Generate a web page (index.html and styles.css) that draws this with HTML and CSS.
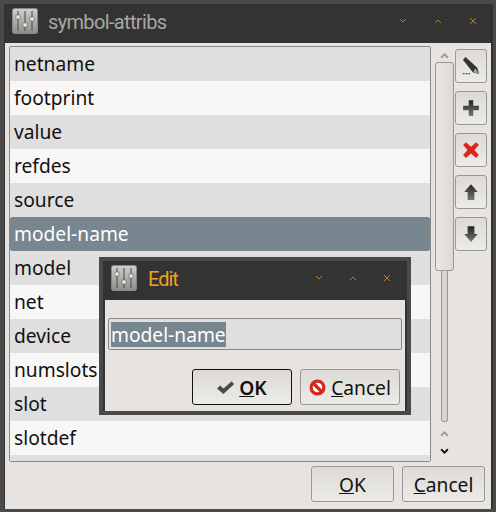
FILE: index.html
```html
<!DOCTYPE html>
<html>
<head>
<meta charset="utf-8" />
<title>symbol-attribs</title>
<link rel="stylesheet" href="styles.css">
</head>
<body>
	<svg class="defs" width="0" height="0">
		<defs>
			<linearGradient id="mixer-bg" x1="0" y1="0" x2="0" y2="1">
				<stop offset="0" stop-color="#d2d0cc"/>
				<stop offset="1" stop-color="#8f8d88"/>
			</linearGradient>
			<linearGradient id="arrow-bg" x1="0" y1="0" x2="0" y2="1">
				<stop offset="0" stop-color="#222"/>
				<stop offset="1" stop-color="#777"/>
			</linearGradient>
			<symbol id="mixer" viewBox="0 0 26 26">
				<rect x="0.500" y="0.500" width="25" height="25" rx="2" fill="url(#mixer-bg)" stroke="#8a8884"/>
				<path d="M6 3v20M13 3v20M20 3v20" stroke="#5a5a5a" stroke-width="1.200"/>
				<rect x="4" y="7" width="4" height="4" fill="#e8e8e8" stroke="#666" stroke-width=".6"/>
				<rect x="11" y="15" width="4" height="4" fill="#e8e8e8" stroke="#666" stroke-width=".6"/>
				<rect x="18" y="9" width="4" height="4" fill="#e8e8e8" stroke="#666" stroke-width=".6"/>
			</symbol>
		</defs>
	</svg>

	<div class="window">
		<div class="titlebar">
			<svg class="app-icon"><use href="#mixer"/></svg>
			<span class="title">symbol-attribs</span>
			<div class="wm-btns">
				<svg viewBox="0 0 8 6"><path d="M1 1l3 3 3-3"/></svg>
				<svg viewBox="0 0 8 6"><path d="M1 5l3-3 3 3"/></svg>
				<svg viewBox="0 0 8 8"><path d="M1 1l6 6M7 1l-6 6"/></svg>
			</div>
		</div>
		<div class="client">
			<div class="main">
				<div class="list">
					<div class="row">netname</div>
					<div class="row alt">footprint</div>
					<div class="row">value</div>
					<div class="row alt">refdes</div>
					<div class="row">source</div>
					<div class="row selected">model-name</div>
					<div class="row">model</div>
					<div class="row alt">net</div>
					<div class="row">device</div>
					<div class="row alt">numslots</div>
					<div class="row">slot</div>
					<div class="row alt">slotdef</div>
					<div class="row"></div>
				</div>
				<div class="scrollbar">
					<svg class="sb-arrow up-top" viewBox="0 0 8 6"><path d="M1 5l3-3 3 3"/></svg>
					<div class="thumb"></div>
					<div class="groove"></div>
					<svg class="sb-arrow up-bottom" viewBox="0 0 8 6"><path d="M1 5l3-3 3 3"/></svg>
					<svg class="sb-arrow down" viewBox="0 0 8 6"><path d="M1 1l3 3 3-3"/></svg>
				</div>
				<div class="tools">
					<button class="tool">
						<svg class="pencil" viewBox="0 0 20 20">
							<path d="M1 3l3-3 13 12 2 7-7-2z" fill="#333"/>
							<path d="M15 12.500l4 6.500-6.500-2.500z" fill="#a5a3a0"/>
							<path d="M1 18.500h2M4 18.500h2M7 18.500h2" stroke="#555" stroke-width="1.500"/>
						</svg>
					</button>
					<button class="tool">
						<svg viewBox="0 0 16 16"><path d="M6 1h4v5h5v4h-5v5H6v-5H1V6h5z" fill="url(#arrow-bg)"/></svg>
					</button>
					<button class="tool">
						<svg viewBox="0 0 16 16"><path d="M3.500 1L8 5l4.500-4L15 3.500 11 8l4 4.500-2.500 2.500L8 11l-4.500 4L1 12.500 5 8 1 3.500z" fill="#d8281c"/></svg>
					</button>
					<button class="tool">
						<svg viewBox="0 0 14 16"><path d="M7 1l6 7H10v7H4V8H1z" fill="url(#arrow-bg)"/></svg>
					</button>
					<button class="tool">
						<svg viewBox="0 0 14 16"><path d="M4 1h6v7h3l-6 7-6-7h3z" fill="url(#arrow-bg)"/></svg>
					</button>
				</div>
			</div>
			<div class="actions">
				<button class="btn"><span><u>O</u>K</span></button>
				<button class="btn"><span><u>C</u>ancel</span></button>
			</div>
		</div>
	</div>

	<div class="dialog">
		<div class="titlebar small">
			<svg class="app-icon"><use href="#mixer"/></svg>
			<span class="title">Edit</span>
			<div class="wm-btns">
				<svg viewBox="0 0 8 6"><path d="M1 1l3 3 3-3"/></svg>
				<svg viewBox="0 0 8 6"><path d="M1 5l3-3 3 3"/></svg>
				<svg viewBox="0 0 8 8"><path d="M1 1l6 6M7 1l-6 6"/></svg>
			</div>
		</div>
		<div class="dialog-body">
			<div class="input"><span class="sel">model-name</span></div>
			<div class="dialog-actions">
				<button class="btn default">
					<svg viewBox="1 1 16 12"><path d="M1 8l3-3 3 3 8-7 2 3L7 13z" fill="#4a4a4a"/></svg>
					<span class="bold"><u>O</u>K</span>
				</button>
				<button class="btn">
					<svg viewBox="0 0 16 16">
						<circle cx="8" cy="8" r="6" fill="#fff" stroke="#d0281c" stroke-width="3"/>
						<path d="M4 4l8 8" stroke="#d0281c" stroke-width="3"/>
					</svg>
					<span><u>C</u>ancel</span>
				</button>
			</div>
		</div>
	</div>
</body>
</html>
```

FILE: styles.css
```css
* {
	margin: 0;
	padding: 0;
	box-sizing: border-box;
}
html,body {
	width: 100%;
	height: 100%;
	overflow: hidden;
}
body {
	font-family: "Noto Sans", sans-serif;
	font-size: 19.2px;
	color: #111;
	background: #333;
}
.defs {
	position: absolute;
}
.window {
	width: 496px;
	height: 512px;
	display: flex;
	flex-direction: column;
	background: #333;
	border: 4px solid #4a4a4a;
	border-right-width: 3px;
	border-bottom-width: 3px;
}
.titlebar {
	height: 39px;
	flex: none;
	display: flex;
	align-items: center;
	padding-left: 8px;
	padding-bottom: 5px;
}
.app-icon {
	width: 26px;
	height: 26px;
	flex: none;
}
.title {
	margin-left: 10px;
	margin-top: 2px;
	font-family: Roboto, sans-serif;
	font-size: 20px;
	letter-spacing: -0.65px;
	color: #a9a7a2;
}
.wm-btns {
	margin-left: auto;
	display: flex;
	gap: 27px;
	padding-right: 16px;
	align-items: center;
}
.wm-btns svg {
	width: 8px;
	height: 8px;
	fill: none;
	stroke: #b5811f;
	stroke-width: 1;
}
.client {
	flex: 1;
	margin-left: 1px;
	margin-right: 2px;
	background: #e6e3e0;
	padding: 3px 3px 5px 4px;
	display: flex;
	flex-direction: column;
	min-height: 0;
}
.main {
	display: flex;
	height: 416px;
}
.list {
	width: 422px;
	height: 416px;
	flex: none;
	border: 1px solid #8a8884;
	border-radius: 2px;
	background: #f8f7f5;
	overflow: hidden;
}
.row {
	height: 34px;
	line-height: 34px;
	padding-left: 4px;
	background: #dfdfdf;
}
.row.alt {
	background: #f8f7f5;
}
.row.selected {
	background: #78868f;
	color: #fff;
	border-radius: 2px;
}
.scrollbar {
	width: 19px;
	margin-left: 4px;
	display: flex;
	flex-direction: column;
	align-items: center;
	flex: none;
}
.sb-arrow {
	width: 9px;
	height: 7px;
	flex: none;
	fill: none;
	stroke: #9b9995;
	stroke-width: 1.6;
}
.sb-arrow.up-top {
	margin-top: 6px;
}
.sb-arrow.up-bottom {
	margin-top: 8px;
}
.sb-arrow.down {
	margin-top: 11px;
	stroke: #111;
}
.thumb {
	width: 19px;
	height: 209px;
	margin-top: 3px;
	border: 1px solid #9a9894;
	border-radius: 3px;
	background: linear-gradient(to right, #e9e6e3, #dcd9d5);
}
.groove {
	width: 7px;
	height: 151px;
	border: 1px solid #9a9894;
	border-top: 0;
	border-radius: 0 0 3px 3px;
	background: #d9d6d2;
}
.tools {
	display: flex;
	flex-direction: column;
	gap: 8px;
	margin-left: 1px;
	margin-top: 3px;
}
.tool {
	width: 32px;
	height: 34px;
	display: flex;
	align-items: center;
	justify-content: center;
	border: 1px solid #9a9894;
	border-radius: 3px;
	background: linear-gradient(#dddad6, #ecebe8);
}
.tool svg {
	width: 18px;
	height: 18px;
}
.actions {
	display: flex;
	justify-content: flex-end;
	gap: 8px;
	margin-top: 4px;
	padding-right: 3px;
}
.btn {
	height: 36px;
	width: 83px;
	display: flex;
	align-items: center;
	justify-content: center;
	gap: 5px;
	border: 1px solid #9a9894;
	border-radius: 3px;
	background: linear-gradient(#dddad6, #ecebe8);
	font-family: "Noto Sans", sans-serif;
	font-size: 19.2px;
	color: #111;
}
.dialog {
	position: absolute;
	left: 99px;
	top: 257px;
	width: 312px;
	height: 158px;
	display: flex;
	flex-direction: column;
	background: #333;
	border: 4px solid #4a4a4a;
}
.small .title {
	color: #f0a020;
	margin-left: 11px;
	letter-spacing: -1px;
}
.small .wm-btns {
	padding-right: 16px;
	gap: 26px;
}
.dialog-body {
	flex: 1;
	margin: 0 2px;
	background: #e6e3e0;
	padding: 18px 3px 0 3px;
	min-height: 0;
}
.input {
	height: 32px;
	border: 1px solid #8a8884;
	border-radius: 2px;
	background: #dfdfdf;
	padding: 0 2px;
	display: flex;
	align-items: center;
}
.sel {
	background: #78868f;
	color: #fff;
	line-height: 25px;
}
.dialog-actions {
	display: flex;
	justify-content: flex-end;
	gap: 8px;
	margin-top: 19px;
	padding-right: 2px;
}
.dialog-actions .btn {
	width: 100px;
}
.dialog-actions .btn svg {
	width: 17px;
	height: 17px;
	flex: none;
}
.btn.default {
	border-color: #111;
}
.bold {
	font-weight: 600;
}
```
